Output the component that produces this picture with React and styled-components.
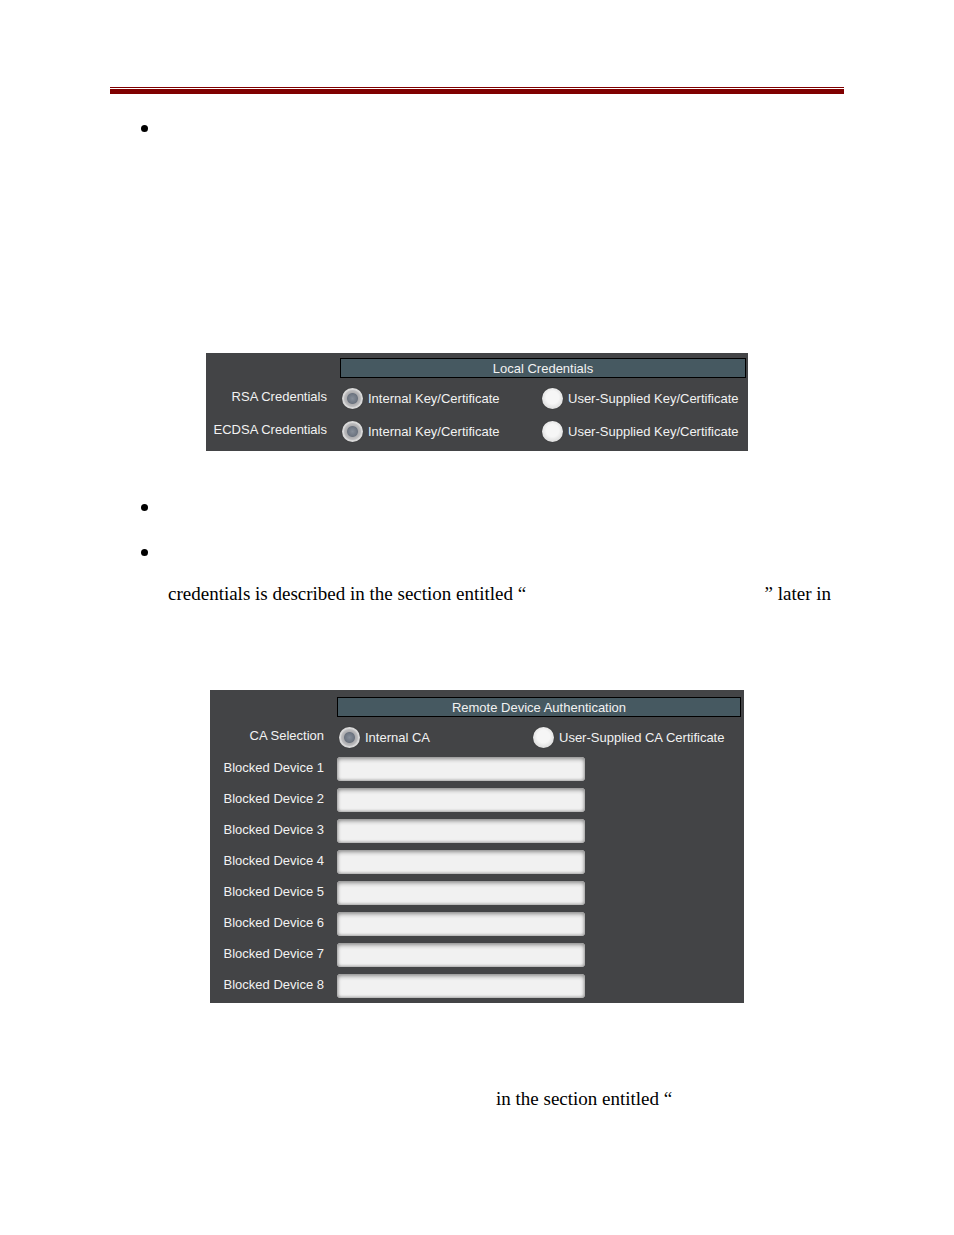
import React from "react";
import styled, { createGlobalStyle } from "styled-components";

const GlobalStyle = createGlobalStyle`
  * { box-sizing: border-box; }
  body { margin: 0; background: #fff; }
`;

const Page = styled.main`
  min-height: 100vh;
  padding: 87px 110px 40px;
  color: #000;
  font: 19px/22px "Liberation Serif", "Times New Roman", serif;
`;

const HeaderRule = styled.div`
  height: 7px;
  border-top: 1px solid #800000;
  border-bottom: 5px solid #800000;
`;

const Bullets = styled.ul`
  list-style: none;
  margin: ${(p) => p.$space}px 0 0;
  padding: 0 13px 0 31px;
  display: flex;
  flex-direction: column;
  gap: 23px;
`;

const Bullet = styled.li`
  display: grid;
  grid-template-columns: 27px 1fr;
  row-gap: 20px;
  &::before {
    content: "";
    width: 7px;
    height: 7px;
    margin: 8px 0 7px;
    border-radius: 50%;
    background: #000;
  }
`;

const SplitLine = styled.p`
  grid-column: 2;
  grid-row: 2;
  margin: 0;
  display: flex;
  justify-content: space-between;
  white-space: nowrap;
`;

const Closing = styled.p`
  margin: 85px 0 0;
  padding-left: 386px;
  white-space: nowrap;
`;

const Panel = styled.form`
  width: 100%;
  max-width: ${(p) => p.$width}px;
  margin: ${(p) => p.$space}px auto 0;
  padding: ${(p) => p.$pad};
  background: #434446;
  color: #f2f2f2;
  font: 13px/16px "Liberation Sans", Arial, sans-serif;
`;

const PanelTitle = styled.h2`
  margin: 0 0 4px ${(p) => p.$indent}px;
  height: 20px;
  border: 1px solid #000;
  background: #465961;
  font-size: 13px;
  font-weight: 400;
  line-height: 20px;
  text-align: center;
`;

const ChoiceRow = styled.fieldset`
  border: 0;
  margin: 0;
  padding: 0;
  min-width: 0;
  height: 33px;
  display: grid;
  grid-template-columns: ${(p) => p.$columns};
  align-items: center;
`;

const RowName = styled.span`
  padding: 0 13px 4px 0;
  text-align: right;
  white-space: nowrap;
`;

const Choice = styled.label`
  display: flex;
  align-items: center;
  gap: 5px;
  padding-left: 2px;
  white-space: nowrap;
`;

const Radio = styled.input`
  appearance: none;
  flex: none;
  width: 21px;
  height: 21px;
  margin: 0;
  border-radius: 50%;
  background: radial-gradient(circle at 50% 45%, #f6f6f6 0 40%, #dedede 72%);
  box-shadow: 0 0 1px #222;
  &:checked {
    background: radial-gradient(circle, #868e99 0, #6c7480 5px, #adadaf 6px, #bcbcbe 8px, #d8d8d8 9px);
  }
`;

const Devices = styled.div`
  display: flex;
  flex-direction: column;
  gap: 7px;
  padding-top: 3px;
`;

const DeviceRow = styled.div`
  display: grid;
  grid-template-columns: 127px 248px;
  align-items: center;
  height: 24px;
`;

const DeviceName = styled.label`
  padding: 0 13px 2px 0;
  text-align: right;
`;

const DeviceInput = styled.input`
  width: 100%;
  height: 24px;
  margin: 0;
  padding: 0 8px;
  border: 0;
  border-radius: 4px;
  background: #f1f1f1;
  box-shadow: inset 0 2px 4px #909090, inset 0 -1px 3px #b8b8b8, inset 0 0 3px #b0b0b0;
  font: inherit;
`;

function Choices({ name, label, options, columns }) {
  return (
    <ChoiceRow $columns={columns} aria-labelledby={`${name}-name`}>
      <RowName id={`${name}-name`}>{label}</RowName>
      {options.map((option, i) => (
        <Choice key={option}>
          <Radio type="radio" name={name} defaultChecked={i === 0} />
          {option}
        </Choice>
      ))}
    </ChoiceRow>
  );
}

const keyOptions = ["Internal Key/Certificate", "User-Supplied Key/Certificate"];
const caOptions = ["Internal CA", "User-Supplied CA Certificate"];
const devices = [1, 2, 3, 4, 5, 6, 7, 8];

export default function App() {
  return (
    <>
      <GlobalStyle />
      <Page>
        <HeaderRule />
        <Bullets $space={23}>
          <Bullet />
        </Bullets>

        <Panel $width={542} $space={214} $pad="5px 2px 3px 0">
          <PanelTitle $indent={134}>Local Credentials</PanelTitle>
          <Choices name="rsa" label="RSA Credentials" options={keyOptions} columns="134px 200px 1fr" />
          <Choices name="ecdsa" label="ECDSA Credentials" options={keyOptions} columns="134px 200px 1fr" />
        </Panel>

        <Bullets $space={45}>
          <Bullet />
          <Bullet>
            <SplitLine>
              <span>credentials is described in the section entitled “</span>
              <span>” later in</span>
            </SplitLine>
          </Bullet>
        </Bullets>

        <Panel $width={534} $space={85} $pad="7px 3px 5px 0">
          <PanelTitle $indent={127}>Remote Device Authentication</PanelTitle>
          <Choices name="ca" label="CA Selection" options={caOptions} columns="127px 194px 1fr" />
          <Devices>
            {devices.map((n) => (
              <DeviceRow key={n}>
                <DeviceName htmlFor={`device-${n}`}>Blocked Device {n}</DeviceName>
                <DeviceInput id={`device-${n}`} type="text" />
              </DeviceRow>
            ))}
          </Devices>
        </Panel>

        <Closing>in the section entitled “</Closing>
      </Page>
    </>
  );
}
